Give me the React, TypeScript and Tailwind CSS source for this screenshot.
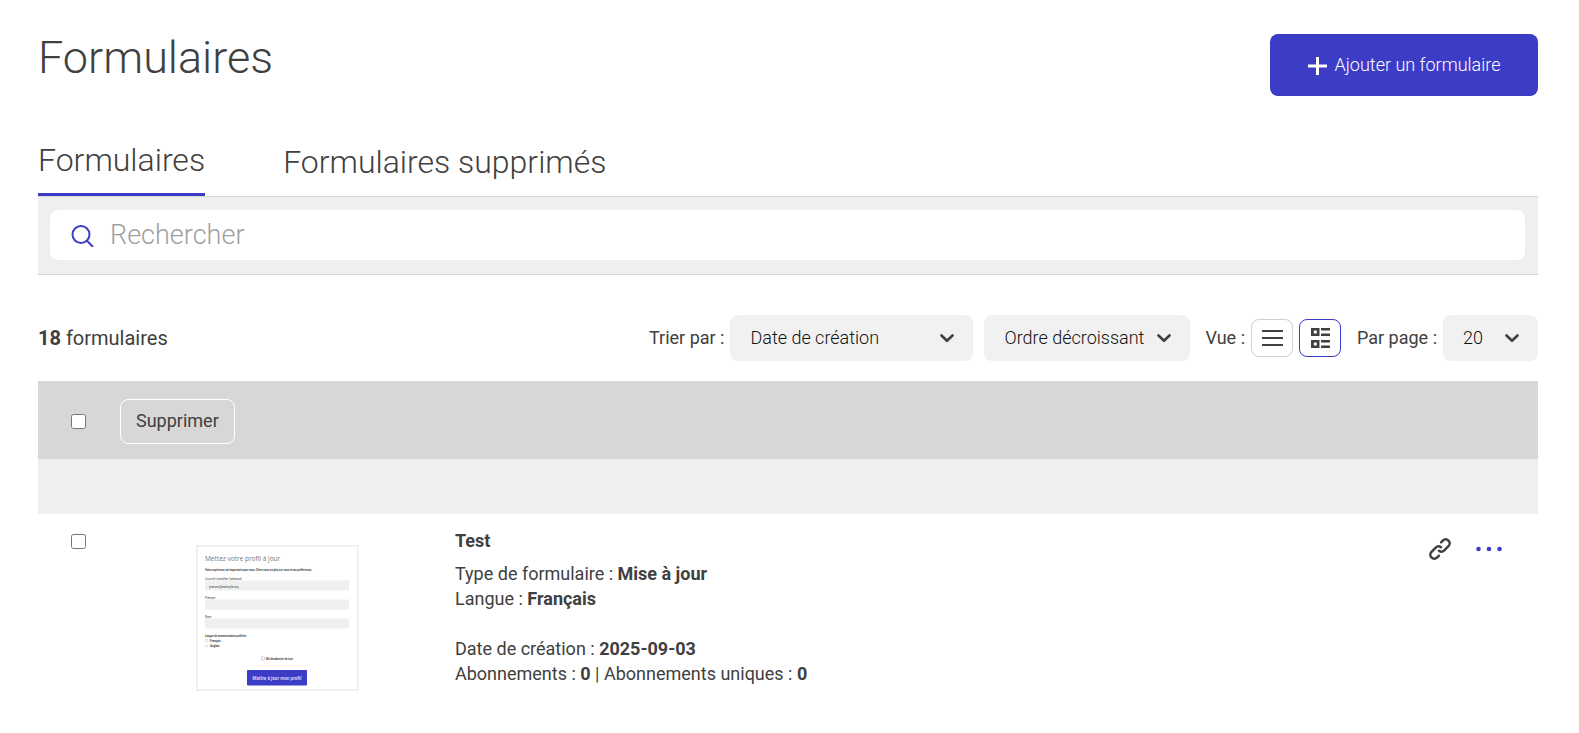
import React, { useState } from 'react'

const sampleForms = [
  {
    id: 1,
    name: 'Test',
    type: 'Mise à jour',
    language: 'Français',
    createdAt: '2025-09-03',
    subscriptions: 0,
    uniqueSubscriptions: 0,
  },
]

const ChevronIcon = () => (
  <svg viewBox="0 0 14 10" className="pointer-events-none absolute top-1/2 right-[19px] h-[10px] w-[14px] -translate-y-1/2" fill="none" stroke="#404040" strokeWidth="2.6">
    <path d="M1.5 2.5 7 7.800 12.5 2.5" strokeLinecap="round" strokeLinejoin="round" />
  </svg>
)

const SearchIcon = () => (
  <svg viewBox="0 0 24 24" className="h-6 w-6 shrink-0" fill="none" stroke="#3d3cc7" strokeWidth="2">
    <circle cx="11" cy="11.5" r="8.5" />
    <path d="M17 17.7 23 24" />
  </svg>
)

const ListIcon = () => (
  <svg viewBox="0 0 21 16" className="h-4 w-[21px]" fill="#404040">
    <path d="M0 0h21v2H0zM0 7h21v2H0zM0 14h21v2H0z" />
  </svg>
)

const DetailIcon = () => (
  <svg viewBox="0 0 19 20" className="h-5 w-[19px]" fill="#404040">
    <path fillRule="evenodd" d="M0 0h8.500v8H0zM2.800 2.500v3h3v-3zM0 12h8.500v8H0zM2.800 14.500v3h3v-3z" />
    <path d="M10 0h9v2.500h-9zM10 5.500h9V8h-9zM10 12h9v2.500h-9zM10 17.500h9V20h-9z" />
  </svg>
)

const LinkIcon = () => (
  <svg viewBox="-12 -12 24 24" className="h-6 w-6" fill="none" stroke="#404040" strokeWidth="2.5" strokeLinecap="round">
    <g transform="rotate(-45)">
      <path d="M5.500 -4H8A4 4 0 0 1 8 4H2A4 4 0 0 1 -2 0.500" />
      <path d="M-5.500 4H-8A4 4 0 0 1 -8 -4H-2A4 4 0 0 1 2 -0.500" />
    </g>
  </svg>
)

// Small preview of the public form
const FormPreview = () => (
  <svg viewBox="0 0 163 146" className="h-[146px] w-[163px]" fontFamily="Roboto, sans-serif" fill="#444">
    <rect x="1" y="1" width="161" height="144" fill="#fff" stroke="#ebebeb" strokeWidth="1.5" />
    <text x="9" y="16" fontSize="6.500" fontFamily="'Open Sans', sans-serif" fill="#777">Mettez votre profil à jour</text>
    <text x="9" y="26" fontSize="2.600" fontWeight="700">Votre expérience est importante pour nous. Dites-nous-en plus sur vous et vos préférences.</text>
    <text x="9" y="35" fontSize="3">Courriel (<tspan textDecoration="underline">modifier l'adresse</tspan>)</text>
    <rect x="9" y="35.500" width="144" height="10" fill="#eff0f0" />
    <text x="13" y="42.500" fontSize="3">prenom@exemple.org</text>
    <text x="9" y="54" fontSize="3">Prénom</text>
    <rect x="9" y="54.500" width="144" height="10" fill="#eff0f0" />
    <text x="9" y="73" fontSize="3">Nom</text>
    <rect x="9" y="73.500" width="144" height="10" fill="#eff0f0" />
    <text x="9" y="91.500" fontSize="2.600" fontWeight="700">Langue de communication préférée</text>
    <circle cx="10.5" cy="95.500" r="1.3" fill="none" stroke="#bbb" strokeWidth=".4" />
    <text x="14" y="96.500" fontSize="2.800" fontWeight="700">Français</text>
    <circle cx="10.5" cy="101" r="1.3" fill="none" stroke="#bbb" strokeWidth=".4" />
    <text x="14" y="102" fontSize="2.800" fontWeight="700">Anglais</text>
    <rect x="65.500" y="112" width="3" height="3" fill="#fff" stroke="#aaa" strokeWidth=".5" />
    <text x="70" y="114.500" fontSize="2.600" fontWeight="700">Me désabonner de tout</text>
    <rect x="51" y="125" width="60" height="15.500" rx="1" fill="#3d3cc7" />
    <text x="81" y="134.500" fontSize="4.600" fontWeight="700" fill="#d5d5f5" textAnchor="middle">Mettre à jour mon profil</text>
  </svg>
)

type SelectProps = {
  id: string
  options: string[]
  width: string
  label?: string
}

const Select = ({ id, options, width, label }: SelectProps) => (
  <div className={`relative ${width}`}>
    <select id={id} aria-label={label} className="h-[46px] w-full appearance-none rounded-lg bg-[#f1f1f1] pr-8 pl-5 text-lg font-light text-[#111]">
      {options.map((option) => (
        <option key={option}>{option}</option>
      ))}
    </select>
    <ChevronIcon />
  </div>
)

const App = () => {
  const [view, setView] = useState('detail')

  return (
    <div className="min-h-screen bg-white pt-[34px] pr-[41px] pl-[38px] font-['Roboto',sans-serif] text-lg text-[#404040]">
      {/* Page header */}
      <header className="flex items-start justify-between">
        <h1 className="text-[45px] leading-[48px] font-light">Formulaires</h1>
        <button type="button" className="flex h-[62px] min-w-[268px] items-center justify-center gap-2 rounded-lg bg-[#3d3cc7] px-9 font-light text-white">
          <svg viewBox="0 0 19 18" className="mt-[2px] h-[18px] w-[19px]" fill="none" stroke="currentColor" strokeWidth="3">
            <path d="M0 9h19M9.500 0v18" />
          </svg>
          Ajouter un formulaire
        </button>
      </header>

      {/* Tabs */}
      <nav className="mt-[44px] flex items-start gap-[78px] text-[32px] leading-10 font-light">
        <a href="#formulaires" className="h-14 border-b-[3px] border-[#3d3cc7]">Formulaires</a>
        <a href="#supprimes" className="pt-[2px]">Formulaires supprimés</a>
      </nav>

      {/* Search */}
      <div className="border-y border-[#d7d7d7] bg-[#efefef] pt-[13px] pr-[13px] pb-[14px] pl-3">
        <div className="flex h-[50px] items-center gap-4 rounded-lg bg-white pl-5">
          <SearchIcon />
          <input type="text" aria-label="Rechercher" placeholder="Rechercher" className="h-full min-w-0 flex-1 rounded-lg text-[27px] font-light outline-none placeholder:text-[#9f9f9f]" />
        </div>
      </div>

      {/* Sort and view options */}
      <div className="mt-10 flex items-center justify-between">
        <p className="text-xl"><strong>18</strong> formulaires</p>
        <div className="flex items-center">
          <label htmlFor="sort" className="mr-[6px]">Trier par :</label>
          <Select id="sort" width="w-[243px]" options={['Date de création', 'Nom']} />
          <div className="mr-[15px] ml-[11px]">
            <Select id="order" label="Ordre" width="w-[206px]" options={['Ordre décroissant', 'Ordre croissant']} />
          </div>
          <span className="mr-[6px]">Vue :</span>
          <div className="flex gap-[6px]">
            <button
              type="button"
              aria-label="Liste"
              onClick={() => setView('list')}
              className={`flex h-[38px] w-[42px] items-center justify-center rounded-lg border ${view === 'list' ? 'border-[#3d3cc7]' : 'border-[#d0d0d0]'}`}
            >
              <ListIcon />
            </button>
            <button
              type="button"
              aria-label="Détails"
              onClick={() => setView('detail')}
              className={`flex h-[38px] w-[42px] items-center justify-center rounded-lg border ${view === 'detail' ? 'border-[#3d3cc7]' : 'border-[#d0d0d0]'}`}
            >
              <DetailIcon />
            </button>
          </div>
          <label htmlFor="per-page" className="mr-[6px] ml-4">Par page :</label>
          <Select id="per-page" width="w-[95px]" options={['20', '50', '100']} />
        </div>
      </div>

      {/* Bulk actions */}
      <div className="mt-5 flex h-[78px] items-center bg-[#d7d7d7] pt-[2px] pl-[33px]">
        <input type="checkbox" aria-label="Tout sélectionner" className="h-[15px] w-[15px]" />
        <button type="button" className="ml-[34px] h-[45px] rounded-lg border border-white px-[15px]">Supprimer</button>
      </div>
      <div className="h-[55px] bg-[#efefef]"></div>

      {/* Forms */}
      <ul>
        {sampleForms.map((form) => (
          <li key={form.id} className="flex items-start pt-[14px] pr-9 pb-8 pl-[33px]">
            <input type="checkbox" aria-label={`Sélectionner ${form.name}`} className="mt-[6px] h-[15px] w-[15px]" />
            <div className="mt-[17px] ml-[110px]">
              <FormPreview />
            </div>
            <div className="ml-24 flex-1 leading-[25px]">
              <h2 className="mb-2 font-bold">{form.name}</h2>
              <p>Type de formulaire : <strong>{form.type}</strong></p>
              <p>Langue : <strong>{form.language}</strong></p>
              <p className="mt-[25px]">Date de création : <strong>{form.createdAt}</strong></p>
              <p>
                Abonnements : <strong>{form.subscriptions}</strong> | Abonnements uniques : <strong>{form.uniqueSubscriptions}</strong>
              </p>
            </div>
            <div className="mt-[9px] flex items-center gap-6">
              <a href="#lien" aria-label="Lien du formulaire">
                <LinkIcon />
              </a>
              <button type="button" aria-label="Plus d'actions">
                <svg viewBox="0 0 26 6" className="h-[6px] w-[26px]" fill="#3d3cc7">
                  <circle cx="2.500" cy="3" r="2.300" />
                  <circle cx="13" cy="3" r="2.300" />
                  <circle cx="23.500" cy="3" r="2.300" />
                </svg>
              </button>
            </div>
          </li>
        ))}
      </ul>
    </div>
  )
}

export default App
